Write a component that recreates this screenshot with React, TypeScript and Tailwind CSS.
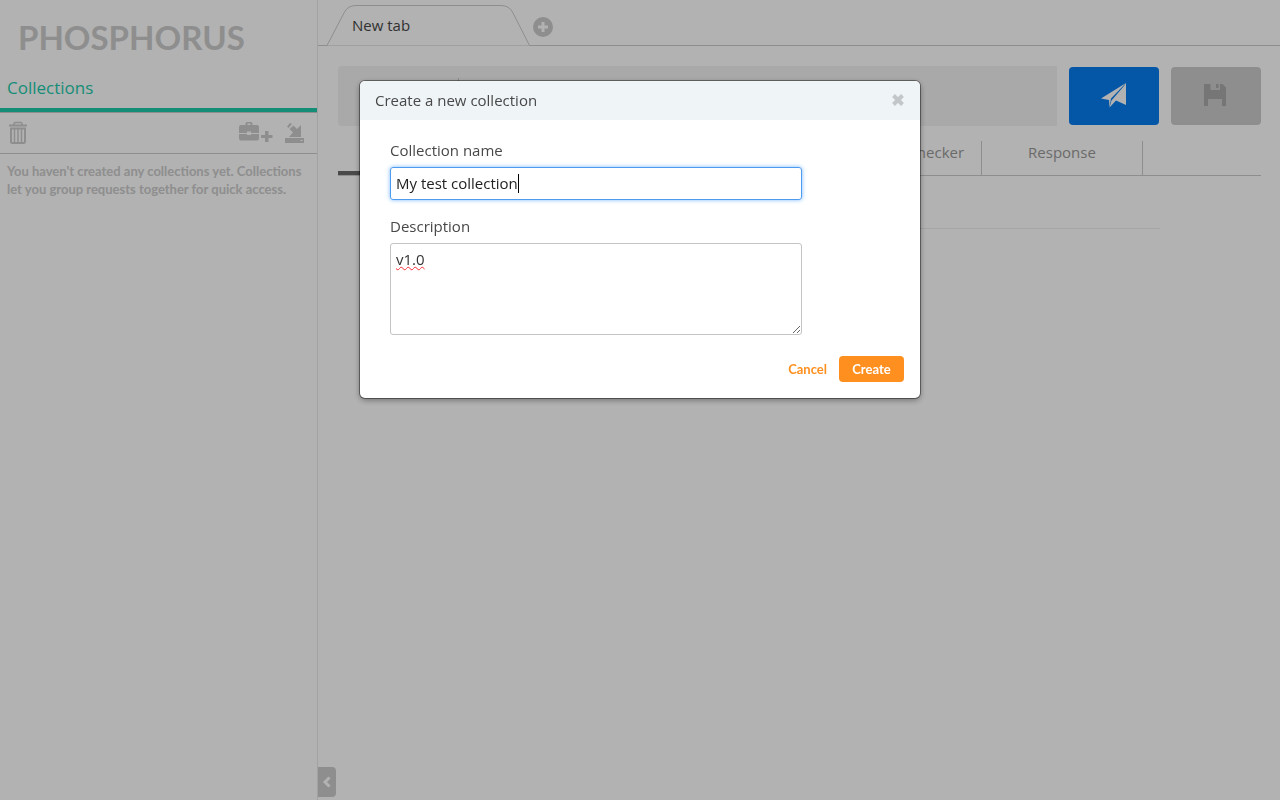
import { useState } from "react";

const TrashIcon = () => (
  <svg width="20" height="24" viewBox="0 0 20 24" fill="none" stroke="currentColor">
    <path d="M6 4V2.500Q6 1.500 7.500 1.500H12.500Q14 1.500 14 2.500V4" strokeWidth="1.500" />
    <path d="M1 4.500H19" strokeWidth="2" />
    <path d="M3 7.500H17V20.500Q17 22 15.500 22H4.500Q3 22 3 20.500Z" strokeWidth="2" />
    <path d="M6.500 8V21M10 8V21M13.500 8V21" strokeWidth="1.500" />
  </svg>
);

const CaseIcon = () => (
  <svg width="34" height="21" viewBox="0 0 34 21" fill="currentColor">
    <path d="M6.500 3V1.500Q6.500 0 8 0H12Q13.500 0 13.500 1.500V3H18Q20 3 20 5V11H12V9.500H8V11H0V5Q0 3 2 3ZM8.500 3H11.500V1.500H8.500Z" fillRule="evenodd" />
    <path d="M0 12H8V13H12V12H20V16.500Q20 18.500 18 18.500H2Q0 18.500 0 16.500Z" />
    <path d="M26 9H29.500V13H33.500V16H29.500V20H26V16H22V13H26Z" />
  </svg>
);

const ImportIcon = () => (
  <svg width="20" height="20" viewBox="0 0 20 20" fill="currentColor">
    <path d="M2 3.500L5 0L7 1L3.500 5Z" />
    <path d="M4.500 6L8.500 2.500L12 6L16 2V14H4L8 9.500Z" />
    <path d="M0 15H19V20H0ZM15.500 17V18H17.500V17Z" fillRule="evenodd" />
  </svg>
);

const PlaneIcon = () => (
  <svg width="26" height="26" viewBox="0 0 26 26" fill="currentColor">
    <path d="M0 15.500L25 0L10 15.500L8.500 24.500L8 17Z" />
    <path d="M25 0V22L15 17.500L8.500 24.500L10.500 17.500L23 3Z" />
  </svg>
);

const SaveIcon = () => (
  <svg width="24" height="22" viewBox="0 0 24 22" fill="currentColor">
    <path d="M0 0H6.500V6H16V0H18.500L22 3.500V22H18V15H4V22H0Z" />
    <path d="M12 0H14.500V4H12Z" />
  </svg>
);

const Sidebar = () => {
  return (
    <aside className="flex w-[318px] shrink-0 flex-col border-r border-[#e8e8e8]">
      <h1 className="h-[68px] pl-[18px] pt-3 font-['Comic_Sans_MS','Lato'] text-[33px] leading-[50px] font-bold text-[#ccc]">PHOSPHORUS</h1>
      <h2 className="h-10 pl-[7px] text-[17px] leading-10 text-[#1ecbab]">Collections</h2>
      <div className="h-[5px] border-b border-[#ccc] bg-[#1ecbab]"></div>
      <div className="flex h-[41px] items-center border-b border-[#ccc] pl-2 pr-3 pb-px text-[#ccc]">
        <button aria-label="Delete"><TrashIcon /></button>
        <button aria-label="New collection" className="ml-auto mr-3"><CaseIcon /></button>
        <button aria-label="Import"><ImportIcon /></button>
      </div>
      <p className="px-[7px] pt-2 font-['Lato'] text-[13px] leading-[18px] font-bold text-[#ccc]">
        You haven't created any collections yet. Collections let you group requests together for quick access.
      </p>
    </aside>
  );
};

const tabs = ["", "", "", "Response checker", "Response"];

const Workspace = () => {
  return (
    <main className="relative min-w-0 flex-1">
      <div className="flex h-[46px] border-b border-[#ccc] pl-[9px]">
        <div className="relative h-[46px] w-[202px] pl-[25px] text-[15px] leading-[50px] text-[#484848]">
          <svg className="absolute left-0 top-0" width="203" height="46" viewBox="0 0 203 46" fill="#fff" stroke="#ccc">
            <path d="M0 45.500L17.500 12Q21 5.500 29 5.500H174Q182 5.500 185.500 12L202.500 45.500" />
          </svg>
          <span className="relative">New tab</span>
        </div>
        <button aria-label="Add tab" className="ml-1 mt-[17px] flex size-5 items-center justify-center rounded-full bg-[#ccc]">
          <svg width="10" height="10" viewBox="0 0 10 10" stroke="#fff" strokeWidth="3"><path d="M5 0V10M0 5H10" /></svg>
        </button>
      </div>
      <div className="pl-5 pr-[19px] pt-5">
        <div className="flex items-center gap-3">
          <div className="flex h-[60px] flex-1 items-center rounded-l bg-[#f2f2f2]">
            <select aria-label="Method" className="h-9 w-[121px] appearance-none border-r border-[#ccc] px-5"></select>
            <input aria-label="URL" className="h-9 min-w-0 flex-1 px-4 text-[15px] outline-none" />
          </div>
          <button aria-label="Send" className="flex h-[58px] w-[90px] items-center justify-center rounded bg-[#077df0] text-white"><PlaneIcon /></button>
          <button aria-label="Save" className="flex h-[58px] w-[90px] items-start justify-center rounded bg-[#ccc] pt-[17px] text-[#aaa]"><SaveIcon /></button>
        </div>
        <div className="mt-[15px] flex h-[35px] border-b border-[#ccc] text-[15px] leading-[22px] text-[#999]">
          {tabs.map((tab, i) => (
            <button
              key={i}
              className={
                i === 0
                  ? "h-[34px] w-[161px] border-b-4 border-[#6a6a6a]"
                  : "h-[34px] w-[161px] border-r border-[#ccc] pb-3"
              }
            >
              {tab}
            </button>
          ))}
        </div>
        <div className="ml-10 mr-[101px] h-[53px] border-b border-[#eee]"></div>
      </div>
      <button aria-label="Hide sidebar" className="absolute bottom-[3px] left-0 flex h-[30px] w-[18px] items-center justify-center rounded-r-sm bg-[#ccc]">
        <svg width="10" height="12" viewBox="0 0 10 12" fill="none" stroke="#fff" strokeWidth="3"><path d="M7.500 1.500L3 6L7.500 10.500" /></svg>
      </button>
    </main>
  );
};

const Dialog = () => {
  const [name, setName] = useState("My test collection");
  const [description, setDescription] = useState("v1.0");
  return (
    <div className="fixed inset-0 bg-black/30 pt-[81px]">
      <form role="dialog" aria-label="Create a new collection" className="mx-auto w-[560px] rounded-[5px] bg-white text-[15px] text-[#484848] shadow-[0_0_0_1px_rgba(0,0,0,0.4),0_2px_6px_rgba(0,0,0,0.4)]">
        <div className="flex h-[39px] items-center justify-between rounded-t-[5px] bg-[#eff4f7] px-[15px]">
          <h3>Create a new collection</h3>
          <button type="button" aria-label="Close" className="pb-[2px] text-[#c3c6c8]">
            <svg width="14" height="12" viewBox="0 0 14 12" stroke="currentColor" strokeWidth="4"><path d="M2.500 1.500L11.500 10.500M11.500 1.500L2.500 10.500" /></svg>
          </button>
        </div>
        <div className="px-[30px] pt-5">
          <label htmlFor="name" className="block pb-[7px] leading-5">Collection name</label>
          <div className="relative">
            <input
              id="name"
              value={name}
              onChange={(e) => setName(e.target.value)}
              className="block h-[33px] w-[412px] rounded-[3px] border border-[#4d9bee] px-[5px] pb-[2px] text-[#222] shadow-[0_0_4px_#7ab8ff] outline-none"
            />
            <span className="absolute left-32 top-[7px] h-[19px] w-px bg-black"></span>
          </div>
          <label htmlFor="description" className="mt-4 block pb-[7px] leading-5">Description</label>
          <textarea
            id="description"
            value={description}
            onChange={(e) => setDescription(e.target.value)}
            className="block h-[92px] w-[412px] rounded-[3px] border border-[#c4c4c4] px-[5px] py-[5px] leading-5 text-[#333] underline decoration-red-500 decoration-wavy decoration-1 outline-none"
          />
        </div>
        <div className="flex items-center justify-end gap-3 px-4 pb-4 pt-[21px] font-['Lato'] text-[13px] leading-[26px] font-bold">
          <button type="button" className="text-[#ff8f1f]">Cancel</button>
          <button type="button" className="h-[26px] w-[65px] rounded-sm bg-[#ff8f1f] text-white">Create</button>
        </div>
      </form>
    </div>
  );
};

const App = () => {
  return (
    <div className="flex min-h-screen bg-white font-['Open_Sans',sans-serif]">
      <Sidebar />
      <Workspace />
      <Dialog />
    </div>
  );
};

export default App;
